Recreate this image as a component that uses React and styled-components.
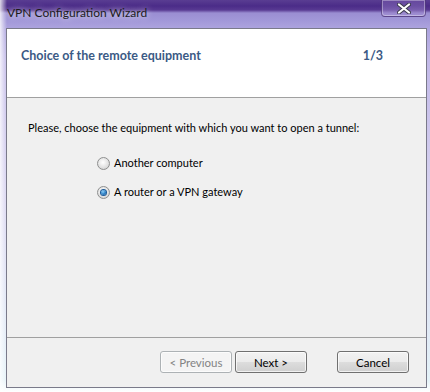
import React from 'react';
import styled, { createGlobalStyle } from 'styled-components';

const GlobalStyle = createGlobalStyle`
  html, body {
    margin: 0;
    padding: 0;
    background: #ffffff;
  }
`;

const Frame = styled.div`
  width: 430px;
  height: 392px;
  box-sizing: border-box;
  display: flex;
  flex-direction: column;
  padding: 0 3px 4px 6px;
  font-family: Lato, 'Liberation Sans', sans-serif;
  font-size: 11px;
  background:
    linear-gradient(90deg, rgba(255, 255, 255, 0.8) 0px, rgba(255, 255, 255, 0) 7px),
    linear-gradient(
      180deg,
      #5a3d92 0px,
      #4b2c88 6px,
      #583a92 10px,
      #9a8ed2 13px,
      #a197d8 20px,
      #aca3de 28px,
      #c2b9e8 60px,
      #d8d4f0 200px,
      #e4f2f8 380px,
      #ffffff 392px
    );
`;

const TitleBar = styled.div`
  height: 28px;
  display: flex;
  align-items: flex-start;
  justify-content: space-between;
`;

const TitleText = styled.div`
  padding-top: 5px;
  padding-left: 1px;
  color: #1c1c1c;
  font-size: 12px;
  text-shadow: 0 0 6px rgba(255, 255, 255, 0.9);
`;

const CloseButton = styled.div`
  width: 45px;
  height: 17px;
  box-sizing: border-box;
  margin-right: 1px;
  border: 1px solid rgba(60, 40, 100, 0.55);
  border-top: none;
  border-radius: 0 0 4px 4px;
  box-shadow: inset 0 0 0 1px rgba(255, 255, 255, 0.35);
  background: linear-gradient(180deg, rgba(110, 80, 165, 0.6), rgba(165, 145, 212, 0.6));
  display: flex;
  align-items: center;
  justify-content: center;
`;

const Client = styled.div`
  flex: 1;
  display: flex;
  flex-direction: column;
  border: 1px solid #7a7a8a;
  background: #f0f0f0;
`;

const Header = styled.div`
  height: 69px;
  background: #ffffff;
  border-bottom: 1px solid #a0a0a0;
  display: flex;
  align-items: flex-start;
  justify-content: space-between;
  padding: 19px 43px 0 14px;
  box-sizing: border-box;
`;

const HeaderTitle = styled.div`
  font-weight: bold;
  font-size: 12.5px;
  color: #3b5a85;
  line-height: 16px;
`;

const Body = styled.div`
  flex: 1;
  padding: 22px 21px 0;
  color: #000;
  border-bottom: 1px solid #a0a0a0;
`;

const Prompt = styled.div`
  line-height: 16px;
`;

const Options = styled.div`
  display: flex;
  flex-direction: column;
  gap: 13px;
  margin-top: 19px;
  padding-left: 69px;
`;

const Option = styled.label`
  display: flex;
  align-items: center;
  gap: 4px;
  line-height: 16px;
`;

const Radio = styled.span`
  width: 13px;
  height: 13px;
  box-sizing: border-box;
  border-radius: 50%;
  border: 1px solid #8e8f8f;
  background: radial-gradient(circle at 45% 40%, #ffffff 0%, #e8e8e8 45%, #c9c9c9 100%);
  display: flex;
  align-items: center;
  justify-content: center;

  &::after {
    content: '';
    width: 5px;
    height: 5px;
    border-radius: 50%;
    display: ${({ checked }) => (checked ? 'block' : 'none')};
    background: radial-gradient(circle at 40% 35%, #8fd0f8 0%, #2a7fc6 55%, #0d4d8c 100%);
    box-shadow: 0 0 0 1px #1a5a99;
  }
`;

const Footer = styled.div`
  height: 49px;
  display: flex;
  align-items: flex-start;
  padding: 13px 17px 0 0;
  box-sizing: border-box;
  justify-content: flex-end;
`;

const Button = styled.button`
  width: 72px;
  height: 22px;
  box-sizing: border-box;
  margin-left: ${({ gap }) => gap}px;
  font-family: inherit;
  font-size: 11.5px;
  padding: 0;
  border-radius: 3px;
  border: 1px solid ${({ disabled }) => (disabled ? '#adb2b5' : '#707070')};
  color: ${({ disabled }) => (disabled ? '#838383' : '#000')};
  background: ${({ disabled }) =>
    disabled
      ? '#f4f4f4'
      : 'linear-gradient(180deg, #f2f2f2 0%, #ebebeb 50%, #dddddd 51%, #cfcfcf 100%)'};
  box-shadow: inset 0 0 0 1px rgba(255, 255, 255, 0.7);
`;

const App = () => (
  <>
    <GlobalStyle />
    <Frame>
      <TitleBar>
        <TitleText>VPN Configuration Wizard</TitleText>
        <CloseButton>
          <svg width="14" height="11" viewBox="0 0 14 11">
            <path
              d="M2 1.5 L12 9.5 M12 1.5 L2 9.5"
              stroke="#3a3a4a"
              strokeWidth="4"
              strokeLinecap="round"
            />
            <path
              d="M2 1.5 L12 9.5 M12 1.5 L2 9.5"
              stroke="#ffffff"
              strokeWidth="2.2"
              strokeLinecap="round"
            />
          </svg>
        </CloseButton>
      </TitleBar>
      <Client>
        <Header>
          <HeaderTitle>Choice of the remote equipment</HeaderTitle>
          <HeaderTitle>1/3</HeaderTitle>
        </Header>
        <Body>
          <Prompt>Please, choose the equipment with which you want to open a tunnel:</Prompt>
          <Options>
            <Option>
              <Radio />
              Another computer
            </Option>
            <Option>
              <Radio checked />
              A router or a VPN gateway
            </Option>
          </Options>
        </Body>
        <Footer>
          <Button disabled gap={0}>&lt; Previous</Button>
          <Button gap={3}>Next &gt;</Button>
          <Button gap={30}>Cancel</Button>
        </Footer>
      </Client>
    </Frame>
  </>
);

export default App;
